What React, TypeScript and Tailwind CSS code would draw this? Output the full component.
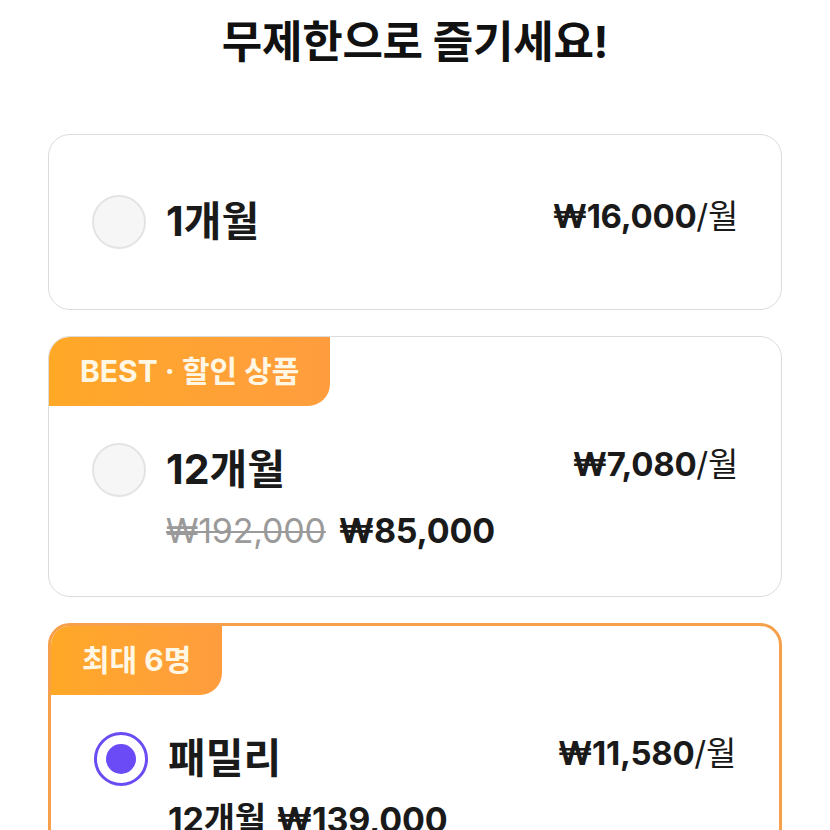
import React, { useState } from 'react';

type Plan = {
  id: string;
  badge?: string;
  title: string;
  monthly: string;
  original?: string;
  total?: string;
  totalLabel?: string;
};

const plans: Plan[] = [
  { id: 'm1', title: '1개월', monthly: '₩16,000' },
  { id: 'm12', badge: 'BEST · 할인 상품', title: '12개월', monthly: '₩7,080', original: '₩192,000', total: '₩85,000' },
  { id: 'family', badge: '최대 6명', title: '패밀리', monthly: '₩11,580', totalLabel: '12개월', total: '₩139,000' },
];

function Radio({ checked }: { checked: boolean }) {
  if (checked) {
    return (
      <span className="w-[54px] h-[54px] shrink-0 rounded-full border-[3px] border-[#6a4cf2] bg-white flex items-center justify-center">
        <span className="w-[30px] h-[30px] rounded-full bg-[#6b4bf6]" />
      </span>
    );
  }
  return <span className="w-[54px] h-[54px] shrink-0 rounded-full border-2 border-[#e3e3e3] bg-[#f6f6f6]" />;
}

function PlanCard({ plan, selected, onSelect }: { plan: Plan; selected: boolean; onSelect: () => void }) {
  return (
    <div
      onClick={onSelect}
      className={`rounded-[22px] bg-white overflow-hidden cursor-pointer ${
        selected ? 'border-[3px] border-[#f6a04b]' : 'border-[1.5px] border-[#dcdcdc]'
      }`}
    >
      {plan.badge && (
        <div className="flex">
          <span className="h-[69px] pl-[31px] pr-[31px] flex items-center rounded-br-[22px] bg-gradient-to-r from-[#ffa826] to-[#ff9d3e] text-[#fff7e4] text-[30px] font-bold">
            {plan.badge}
          </span>
        </div>
      )}

      <div className={`flex items-start gap-5 px-[43px] ${plan.badge ? 'pt-[37px] pb-[45px]' : 'py-[60px]'}`}>
        <Radio checked={selected} />
        <div className="flex-1 flex flex-col gap-[14px]">
          <div className="flex justify-between items-start h-[54px]">
            <span className="h-[54px] flex items-center text-[41px] font-bold text-[#1a1a1a]">{plan.title}</span>
            <span className="mt-[-3px] text-[33px] text-[#1a1a1a] tracking-[-0.3px]">
              <span className="font-bold">{plan.monthly}</span>/월
            </span>
          </div>
          {plan.total && (
            <div className="flex items-center gap-[13px] text-[34px] leading-[40px] font-bold text-[#1a1a1a] tracking-[-0.2px]">
              {plan.original && (
                <span className="font-normal text-[#9a9a9a] line-through decoration-[2px]">{plan.original}</span>
              )}
              {plan.totalLabel && <span className="mr-[-2px]">{plan.totalLabel}</span>}
              <span>{plan.total}</span>
            </div>
          )}
        </div>
      </div>
    </div>
  );
}

export default function App() {
  const [selected, setSelected] = useState('family');

  return (
    <div className="w-[830px] h-[830px] overflow-hidden bg-white font-['Inter','Noto_Sans_CJK_KR',sans-serif]">
      <h1 className="pt-[14px] text-center text-[44px] font-bold text-[#111] leading-[56px] tracking-[-0.3px]">
        무제한으로 즐기세요!
      </h1>

      <div className="mt-[64px] px-[48px] flex flex-col gap-[26px]">
        {plans.map((p) => (
          <PlanCard key={p.id} plan={p} selected={selected === p.id} onSelect={() => setSelected(p.id)} />
        ))}
      </div>
    </div>
  );
}
